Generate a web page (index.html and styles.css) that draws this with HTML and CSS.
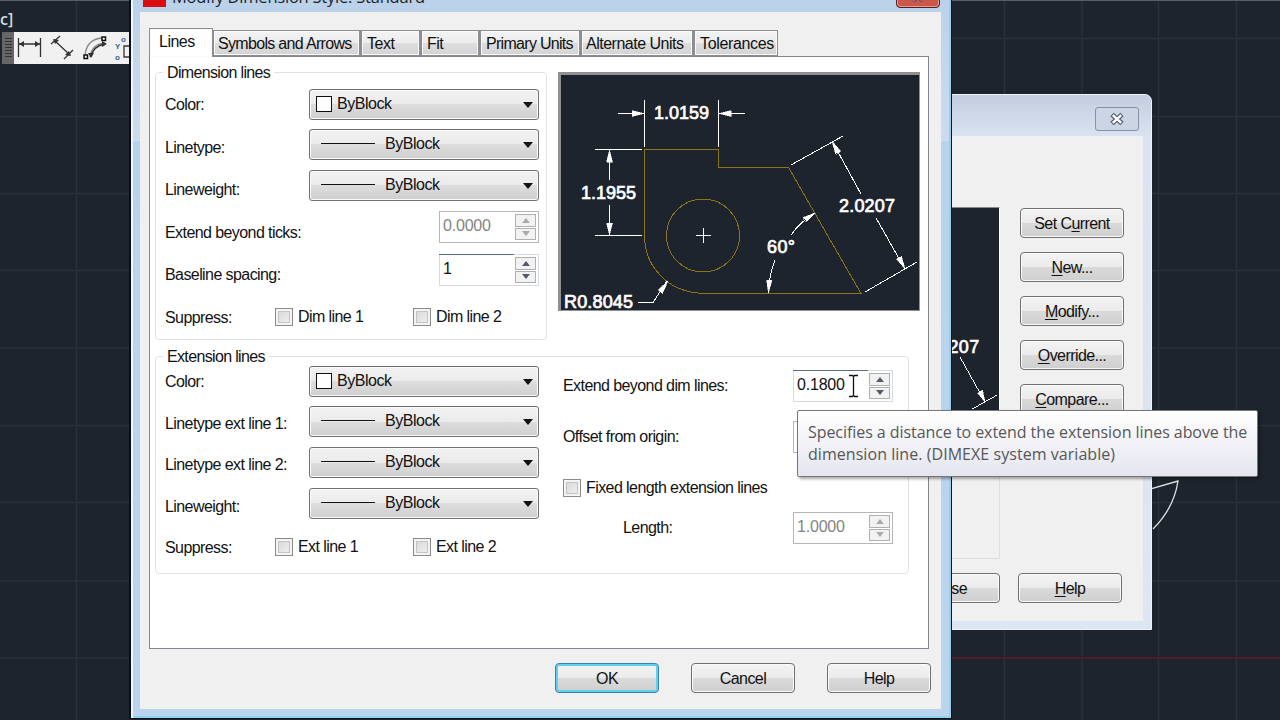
FILE: index.html
```html
<!DOCTYPE html>
<html lang="en">
<head>
  <meta charset="UTF-8" />
  <meta name="viewport" content="width=device-width, initial-scale=1.0"/>
  <title>Modify Dimension Style: Standard</title>
  <link rel="stylesheet" href="styles.css">
</head>
<body>
  <div class="desktop">
    <!-- Drawing area -->
    <svg class="canvas" width="1280" height="720">
      <path class="grid-line" d="M76.5 0V720M1004.5 0V720M1082 0V720M1158.5 0V720M1236.5 0V720M0 38.5H1280M0 116.5H1280M0 193.5H1280M0 270.5H1280M0 348H1280M0 425.5H1280M0 502.5H1280M0 581H1280M0 658H130"/>
      <path class="top-line" d="M0 .5H1280"/>
      <path class="axis-line" d="M950 658H1280"/>
      <path class="door" d="M1150 489L1178 481Q1174 508 1153 529"/>
    </svg>
    <div class="view-label">c]</div>

    <div class="toolbar">
      <span class="grip"></span>
      <svg width="115" height="32" viewBox="14 32 115 32">
        <g fill="none" stroke="#333" stroke-width="1.3">
          <path d="M18.5 38V57M40.5 38V57M19 44H40"/>
          <path d="M51 44L60 36M54 40L70 55M64 59L73 50"/>
          <path d="M85 55Q87 39 102 38M90 57Q92 44 105 43" stroke="#888"/>
          <path d="M91 57Q93 46 105 44"/>
          <path d="M129 46H124V57H129"/>
        </g>
        <path d="M19 44l5-3v6zM40 44l-5-3v6zM53 39l6 1l-4 4zM71 56l-6-1l4-4zM107 44l-5-3v6zM91 58l-3-5h6z" fill="#333"/>
        <path d="M102 37h3.5v3.5h-3.5zM84 55h3.5v3.5h-3.5z" fill="#fff" stroke="#111" stroke-width="1.5"/>
        <g class="ordinate"><text x="121" y="42">o</text><text x="115" y="49">Y</text><text x="115" y="60">o</text></g>
      </svg>
    </div>

    <!-- Dimension Style Manager -->
    <div class="window manager">
      <div class="manager-title">
        <span class="close-btn">
          <svg width="18" height="14" viewBox="0 0 18 14"><path d="M4 2.5L14 11.5M14 2.5L4 11.5" stroke="#566074" stroke-width="5"/><path d="M4.8 3.2L13.2 10.8M13.2 3.2L4.8 10.8" stroke="#fff" stroke-width="2.4"/></svg>
        </span>
      </div>
      <div class="manager-body">
        <div class="manager-left">
          <svg class="manager-preview" width="180" height="240" viewBox="820 207 180 240">
            <g class="dim"><path d="M961 357L986 402M973 409L998 395"/><path class="head" d="M986 402l-7.5-9l5-3z"/></g>
            <text class="dim-text" x="923" y="353" textLength="57">2.0207</text>
          </svg>
          <div class="manager-desc"></div>
          <button class="btn">Close</button>
        </div>
        <div class="manager-buttons">
          <button class="btn">Set C<u>u</u>rrent</button>
          <button class="btn"><u>N</u>ew...</button>
          <button class="btn"><u>M</u>odify...</button>
          <button class="btn"><u>O</u>verride...</button>
          <button class="btn"><u>C</u>ompare...</button>
          <button class="btn manager-help"><u>H</u>elp</button>
        </div>
      </div>
    </div>

    <!-- Modify Dimension Style -->
    <div class="window dialog">
      <div class="dialog-title">
        <span class="app-icon"></span>
        <span class="title-text">Modify Dimension Style: Standard</span>
        <span class="close-red"><svg width="18" height="14" viewBox="0 0 18 14"><path d="M4 2.5L14 11.5M14 2.5L4 11.5" stroke="#70404a" stroke-width="5"/><path d="M4.8 3.2L13.2 10.8M13.2 3.2L4.8 10.8" stroke="#fff" stroke-width="2.4"/></svg></span>
      </div>
      <div class="dialog-body">
        <div class="tabs">
          <div class="tab active">Lines</div>
          <div class="tab tab-symbols">Symbols and Arrows</div>
          <div class="tab tab-text">Text</div>
          <div class="tab tab-fit">Fit</div>
          <div class="tab tab-primary">Primary Units</div>
          <div class="tab tab-alternate">Alternate Units</div>
          <div class="tab tab-tolerances">Tolerances</div>
        </div>

        <div class="tab-panel">
          <div class="top-row">
            <div class="group dim-lines">
              <span class="legend">Dimension lines</span>
              <div class="labels">
                <span>Color:</span>
                <span>Linetype:</span>
                <span>Lineweight:</span>
                <span>Extend beyond ticks:</span>
                <span>Baseline spacing:</span>
                <span>Suppress:</span>
              </div>
              <div class="controls">
                <div class="select"><i class="swatch"></i><span>ByBlock</span></div>
                <div class="select"><i class="line"></i><span>ByBlock</span></div>
                <div class="select"><i class="line"></i><span>ByBlock</span></div>
                <div class="spin disabled"><span>0.0000</span><i class="arrows"><b class="up"></b><b class="down"></b></i></div>
                <div class="spin focus"><span>1</span><i class="arrows"><b class="up"></b><b class="down"></b></i></div>
                <div class="checks">
                  <label><i class="box"></i>Dim line 1</label>
                  <label><i class="box"></i>Dim line 2</label>
                </div>
              </div>
            </div>

            <svg class="preview" width="362" height="239" viewBox="561 75 358 235">
              <g class="part">
                <path d="M644.5 238V149.5H718.5V167.5H788.5L861 293.5H706Q676 293 660 275Q645 259 644.5 238"/>
                <circle cx="703" cy="235.5" r="36.5"/>
              </g>
              <g class="dim">
                <path d="M644.5 100V147M718.5 100V147M618 113.5H644M719 113.5H745"/>
                <path d="M595 149.5H642M595 235.5H642M609.5 150V180M609.5 205V235"/>
                <path d="M791 165L843 136M832 141L861 194M876 218L905 269M865 292L917 262"/>
                <path d="M791 235Q800 222 815 213M775 260Q769 275 768.5 293"/>
                <path d="M638 302.5H653L667 281M696 235.5H711M703.5 228V243"/>
                <path class="head" d="M644 113.5l-12-3v6zM719 113.5l12-3v6zM609.5 150l-3 12h6zM609.5 235l-3-12h6zM832 141l8.5 10l-5 3zM905 269l-8.5-10l5-3zM815 213l-12 4.5l3.5 4zM768.5 293l-2-13h5.5zM668 281l-10 9l4.5 3.5z"/>
              </g>
              <g class="dim-text">
                <text x="654" y="119" textLength="55">1.0159</text>
                <text x="581" y="199" textLength="55">1.1955</text>
                <text x="839" y="212" textLength="56">2.0207</text>
                <text x="767" y="253" textLength="28">60°</text>
                <text x="564" y="308" textLength="69">R0.8045</text>
              </g>
            </svg>
          </div>

          <div class="group ext-lines">
            <span class="legend">Extension lines</span>
            <div class="labels">
              <span>Color:</span>
              <span>Linetype ext line 1:</span>
              <span>Linetype ext line 2:</span>
              <span>Lineweight:</span>
              <span>Suppress:</span>
            </div>
            <div class="controls">
              <div class="select"><i class="swatch"></i><span>ByBlock</span></div>
              <div class="select"><i class="line"></i><span>ByBlock</span></div>
              <div class="select"><i class="line"></i><span>ByBlock</span></div>
              <div class="select"><i class="line"></i><span>ByBlock</span></div>
              <div class="checks">
                <label><i class="box"></i>Ext line 1</label>
                <label><i class="box"></i>Ext line 2</label>
              </div>
            </div>
            <div class="offsets">
              <span>Extend beyond dim lines:</span>
              <div class="spin focus">
                <span>0.1800</span><i class="arrows"><b class="up"></b><b class="down"></b></i>
                <svg class="cursor" width="12" height="24"><path d="M1 1.5H4.5L5.5 2.5L6.5 1.5H10M1 22.5H4.5L5.5 21.5L6.5 22.5H10M5.5 2V22" fill="none" stroke="#111" stroke-width="1.3"/></svg>
              </div>
              <span>Offset from origin:</span>
              <div class="spin"></div>
              <label class="fixed"><i class="box"></i>Fixed length extension lines</label>
              <span class="length">Length:</span>
              <div class="spin disabled"><span>1.0000</span><i class="arrows"><b class="up"></b><b class="down"></b></i></div>
            </div>
          </div>
        </div>

        <div class="dialog-actions">
          <button class="btn default">OK</button>
          <button class="btn">Cancel</button>
          <button class="btn">Help</button>
        </div>
      </div>
    </div>

    <div class="tooltip">Specifies a distance to extend the extension lines above the<br><span class="second">dimension line. (DIMEXE system variable)</span></div>
  </div>
</body>
</html>
```

FILE: styles.css
```css
* {
  margin: 0;
  padding: 0;
  box-sizing: border-box;
}

body {
  font-family: "Liberation Sans", Arial, sans-serif;
  font-size: 16px;
  letter-spacing: -0.58px;
  color: #111;
  overflow: hidden;
}

i {
  font-style: normal;
}

.desktop {
  position: relative;
  width: 1280px;
  height: 720px;
  background: #1e242e;
  overflow: hidden;
}

.canvas {
  display: block;
}

.canvas path {
  fill: none;
}

.grid-line {
  stroke: #2a313b;
  stroke-width: 1.5;
}

.top-line {
  stroke: #56616a;
}

.axis-line {
  stroke: #55192b;
  stroke-width: 2;
}

.door {
  stroke: #dfe3e6;
  stroke-width: 1.3;
}

.view-label {
  position: absolute;
  left: 0;
  top: 9px;
  font-family: "Open Sans", sans-serif;
  font-size: 16px;
  font-weight: 600;
  letter-spacing: 0;
  line-height: 20px;
  color: #d8dadc;
}

.toolbar {
  position: absolute;
  left: 2px;
  top: 32px;
  width: 127px;
  height: 32px;
  display: flex;
  background: #f1f1f1;
}

.grip {
  width: 12px;
  background: #666 repeating-linear-gradient(#333 0 1px, #666 1px 3px) center / 7px 20px no-repeat;
}

.ordinate {
  font-size: 8px;
  font-weight: bold;
  fill: #3c6296;
}

/* Windows */
.window {
  position: absolute;
}

.btn {
  width: 104px;
  height: 30px;
  padding-top: 2px;
  font: inherit;
  letter-spacing: inherit;
  color: #111;
  border: 1px solid #707070;
  border-radius: 4px;
  background: linear-gradient(#f3f3f3, #ebebeb 50%, #dadada 50%, #cfcfcf);
  box-shadow: inset 0 0 0 1px #fafafa;
}

.btn u {
  text-underline-offset: 2px;
}

/* Dimension Style Manager */
.manager {
  left: 811px;
  top: 94px;
  width: 341px;
  height: 536px;
  padding: 0 8px 9px;
  background: linear-gradient(#c5cee0, #d9e3f1 42px, #dde7f3);
  border: 1px solid #f0f4f8;
  border-radius: 7px 7px 0 0;
}

.manager-title {
  height: 41px;
  padding: 12px 4px 0;
}

.close-btn {
  width: 44px;
  height: 24px;
  margin-left: auto;
  display: flex;
  align-items: center;
  justify-content: center;
  border: 1px solid #8791a5;
  border-radius: 3px;
  background: #ccd5e4;
}

.manager-body {
  height: 485px;
  display: flex;
  gap: 20px;
  padding-top: 71px;
  background: #f0f0f0;
}

.manager-left {
  width: 180px;
  display: flex;
  flex-direction: column;
  align-items: flex-end;
}

.manager-preview {
  background: #1e242e;
  border-top: 1px solid #888;
  border-right: 1px solid #fff;
}

.manager-desc {
  width: 180px;
  height: 105px;
  margin: 7px 0 14px;
  border: 1px solid #dfdfdf;
}

.manager-buttons {
  display: flex;
  flex-direction: column;
  gap: 14px;
  padding-top: 1px;
}

.manager-help {
  margin-top: 145px;
  margin-left: -2px;
}

/* Modify Dimension Style */
.dialog {
  left: 129px;
  top: -24px;
  width: 823px;
  height: 743px;
  padding: 0 10px 10px 9px;
  background: linear-gradient(#b7cfe9, #c3d6ed 80px, #cbdcf0 165px, #b7d4ed 165px, #bad4ee);
  border: 1px solid #0a0f16;
  border-left-width: 2px;
  border-top: 0;
  box-shadow: inset 2px 0 0 #eef5fc, inset -2px -2px 0 #8fd3ee;
}

.dialog-title {
  display: flex;
  align-items: flex-end;
  height: 36px;
  padding: 0 1px 4px 3px;
}

.app-icon {
  width: 23px;
  height: 25px;
  margin: 0 6px 1px 0;
  background: #d90d0d;
}

.title-text {
  flex: 1;
  font-family: "Open Sans", "Noto Sans", sans-serif;
  font-size: 16.5px;
  line-height: 22px;
  letter-spacing: -0.22px;
  color: #1a1f28;
}

.close-red {
  display: flex;
  align-items: center;
  justify-content: center;
  width: 44px;
  height: 25px;
  border: 1px solid #54202c;
  border-radius: 0 0 4px 4px;
  background: #c9574a;
  box-shadow: inset 0 0 0 1px #e49a90;
}

.dialog-body {
  height: 697px;
  padding: 15px 12px 0 9px;
  background: #f0f0f0;
}

.tabs {
  display: flex;
  align-items: flex-end;
  height: 29px;
}

.tab {
  height: 26px;
  padding-left: 5px;
  line-height: 25px;
  letter-spacing: -0.5px;
  white-space: nowrap;
  border: 1px solid #8c8e94;
  border-left-width: 2px;
  background: linear-gradient(#f3f3f3, #ececec 50%, #dedede 50%, #d4d4d4);
  box-shadow: inset 0 0 0 1px #fafafa;
}

.tab.active {
  width: 64px;
  height: 29px;
  padding-left: 9px;
  line-height: 25px;
  margin-bottom: -1px;
  border-bottom: 0;
  border-left-width: 1px;
  background: #fff;
  position: relative;
}

.tab-symbols {
  width: 147px;
  padding-left: 4px;
  border-left-width: 1px;
  letter-spacing: -0.68px;
}

.tab-text {
  width: 60px;
}

.tab-fit {
  width: 59px;
}

.tab-primary {
  width: 101px;
  letter-spacing: -0.7px;
}

.tab-alternate {
  width: 113px;
  padding-left: 4px;
}

.tab-tolerances {
  width: 85px;
  padding-left: 5px;
  letter-spacing: -0.35px;
}

.tab-panel {
  height: 593px;
  padding: 15px 8px 0 5px;
  background: #fff;
  border: 1px solid #828790;
}

.top-row {
  display: flex;
  justify-content: space-between;
}

.preview {
  background: #1e242e;
  border: 1px solid #909090;
  border-width: 3px 1px 1px 3px;
}

.preview path,
.preview circle,
.manager-preview path {
  fill: none;
  shape-rendering: crispEdges;
}

.part {
  stroke: #8a7616;
}

.dim {
  stroke: #fff;
}

.dim path.head {
  fill: #fff;
  stroke: #fff;
  stroke-width: 0.5;
}

.dim-text {
  font-size: 18px;
  fill: #fff;
  stroke: #fff;
  stroke-width: 0.7;
  letter-spacing: 0;
}

.group {
  position: relative;
  display: flex;
  border: 1px solid #dfe2e4;
  border-radius: 4px;
}

.legend {
  position: absolute;
  left: 7px;
  top: -10px;
  padding: 0 4px;
  line-height: 20px;
  letter-spacing: -0.65px;
  background: #fff;
}

.dim-lines {
  width: 392px;
  height: 268px;
}

.ext-lines {
  width: 754px;
  height: 218px;
  margin-top: 16px;
}

.labels {
  width: 119px;
  padding-left: 9px;
  white-space: nowrap;
}

.labels span {
  display: block;
}

.dim-lines .labels {
  padding-top: 11px;
}

.dim-lines .labels span {
  height: 42.6px;
  line-height: 42.6px;
}

.ext-lines .labels {
  padding-top: 4px;
}

.ext-lines .labels span {
  height: 41.5px;
  line-height: 41.5px;
}

.controls {
  display: grid;
  width: 264px;
  align-content: start;
  align-items: start;
  justify-items: end;
}

.dim-lines .controls {
  padding-top: 16px;
  grid-template-rows: 40px 41px 41px 43px 54px 18px;
}

.ext-lines .controls {
  padding-top: 9px;
  grid-template-rows: 40px 41px 41px 50px 18px;
}

.select {
  position: relative;
  display: flex;
  align-items: center;
  width: 230px;
  height: 31px;
  padding: 0 0 2px 6px;
  letter-spacing: -0.45px;
  border: 1px solid #707070;
  border-radius: 3px;
  background: linear-gradient(#f2f2f2, #ebebeb 50%, #dddddd 50%, #cfcfcf);
  box-shadow: inset 0 0 0 1px #fafafa;
}

.select::after {
  content: "";
  margin: 2px 5px 0 auto;
  border: 5px solid transparent;
  border-top: 6px solid #111;
  border-bottom: 0;
}

.swatch {
  width: 16px;
  height: 16px;
  margin-right: 5px;
  border: 1.5px solid #111;
  background: #fff;
}

.line {
  width: 54px;
  height: 1px;
  margin: 0 10px 0 5px;
  background: #111;
}

.spin {
  position: relative;
  display: flex;
  justify-content: space-between;
  width: 100px;
  height: 32px;
  padding: 2px 2px 2px 3px;
  line-height: 23px;
  letter-spacing: -0.2px;
  border: 1px solid #b4b6b9;
  background: #fff;
}

.spin.focus {
  border-color: #d5dbe2;
}

.spin.focus::before {
  content: "";
  position: absolute;
  left: -1px;
  top: -1px;
  width: 75px;
  height: 1px;
  background: #5a6f88;
}

.spin.disabled {
  color: #848484;
}

.arrows {
  display: flex;
  flex-direction: column;
  gap: 1px;
}

.arrows b {
  display: flex;
  align-items: center;
  justify-content: center;
  width: 21px;
  height: 13px;
  border: 1px solid #b0b0b0;
  background: #f2f2f2;
}

.arrows b::after {
  content: "";
  border: 4px solid transparent;
}

.arrows .up::after {
  border-bottom: 5px solid #555a6c;
  border-top: 0;
}

.arrows .down::after {
  border-top: 5px solid #555a6c;
  border-bottom: 0;
}

.disabled .up::after {
  border-bottom-color: #aaa;
}

.disabled .down::after {
  border-top-color: #aaa;
}

.checks {
  display: flex;
  width: 264px;
}

.checks label {
  width: 138px;
}

label {
  display: flex;
  align-items: center;
  white-space: nowrap;
}

.checks label:last-child {
  width: 126px;
}

.box {
  width: 18px;
  height: 18px;
  margin-right: 5px;
  border: 1px solid #8a8a8a;
  background: linear-gradient(135deg, #d3d3d3, #f4f4f4);
  box-shadow: inset 0 0 0 2px #f4f4f4, inset 0 0 0 3px #c4c4c4;
}

.offsets {
  display: grid;
  grid-template-columns: 230px 100px;
  grid-template-rows: 32px 32px 21px 32px;
  row-gap: 19px;
  align-content: start;
  align-items: center;
  padding: 13px 0 0 24px;
}

.fixed {
  grid-column: 1 / 3;
  margin-top: 10px;
}

.length {
  padding-left: 60px;
}

.cursor {
  position: absolute;
  left: 54px;
  top: 3px;
}

.dialog-actions {
  display: flex;
  justify-content: flex-end;
  gap: 32px;
  margin: 14px -2px 0 0;
}

.btn.default {
  border-color: #3c7fb1;
  box-shadow: inset 0 0 0 2px #5fd0ee;
}

.tooltip {
  position: absolute;
  left: 797px;
  top: 410px;
  width: 461px;
  height: 67px;
  padding: 11px 10px;
  font-family: "Open Sans", "Noto Sans", sans-serif;
  font-size: 16px;
  line-height: 21.5px;
  letter-spacing: -0.06px;
  white-space: nowrap;
  color: #575757;
  background: linear-gradient(#fff, #e5e5f0);
  border: 1px solid #767676;
  border-radius: 2px;
  box-shadow: 2px 2px 3px rgba(0, 0, 0, 0.35);
}

.second {
  letter-spacing: 0.05px;
}
```
